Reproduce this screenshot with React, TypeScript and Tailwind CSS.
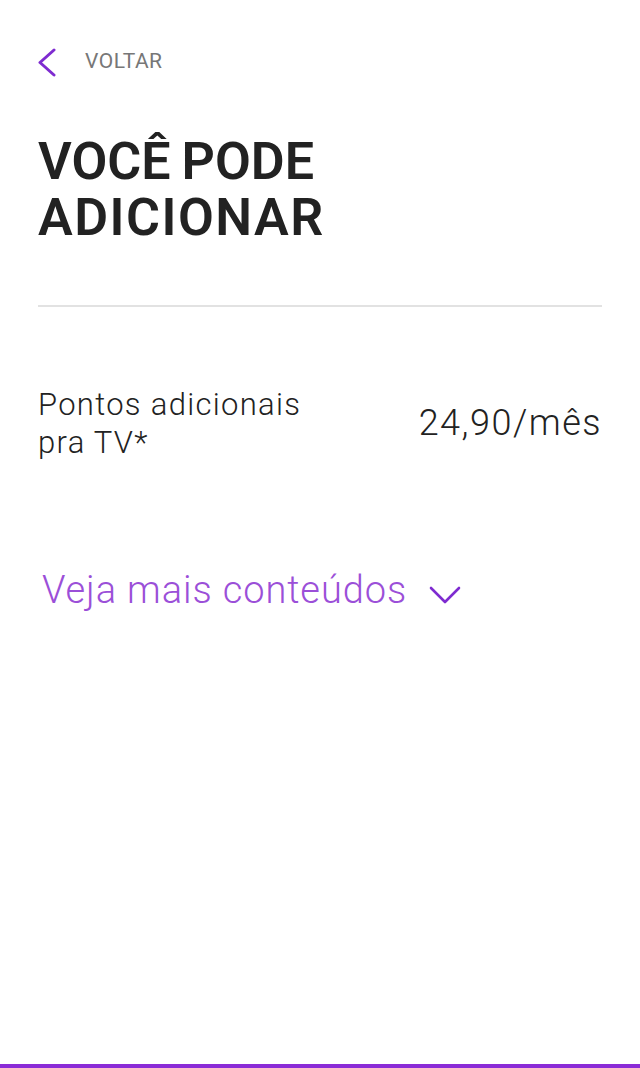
const App: React.FC = () => {
  return (
    <div
      className="relative flex h-[1068px] w-[640px] flex-col bg-white"
      style={{ fontFamily: "Roboto, 'Liberation Sans', sans-serif" }}
    >
      <div className="mt-[47px] flex h-[30px] items-center pl-[36px]">
        <svg width="20" height="30" viewBox="0 0 20 30" fill="none">
          <polyline
            points="18,3 4,15.5 18,28"
            stroke="#7e2bd0"
            strokeWidth="3"
            strokeLinecap="round"
            strokeLinejoin="round"
          />
        </svg>
        <span className="ml-[29px] text-[21px] tracking-[0.5px] text-[#777777]">VOLTAR</span>
      </div>

      <h1 className="mt-[57px] px-[38px] text-[52px] font-semibold leading-[56px] text-[#222222]">
        <span className="block [word-spacing:-2px]">VOCÊ PODE</span>
        <span className="block tracking-[1.5px]">ADICIONAR</span>
      </h1>

      <div className="mx-[38px] mt-[59px] h-[2px] bg-[#e2e2e2]" />

      <div className="mx-[38px] mt-[79px] flex items-start justify-between">
        <p className="text-[31px] font-light leading-[38px] tracking-[1.3px] text-[#222222]">
          Pontos adicionais
          <br />
          pra TV*
        </p>
        <span className="mt-[19px] text-[36px] font-light leading-[36px] tracking-[1.5px] text-[#222222]">
          24,90/mês
        </span>
      </div>

      <button className="ml-[42px] mt-[109px] flex items-start self-start">
        <span className="text-[38px] font-light leading-[38px] tracking-[0.9px] text-[#9b4fd8]">
          Veja mais conteúdos
        </span>
        <svg className="ml-[22px] mt-[14px]" width="32" height="20" viewBox="0 0 32 20" fill="none">
          <polyline
            points="2,3 16,17 30,3"
            stroke="#7e2bd0"
            strokeWidth="2.6"
            strokeLinecap="round"
            strokeLinejoin="round"
          />
        </svg>
      </button>

      <div className="mt-auto h-[4px] w-full bg-[#8a2bd6]" />
    </div>
  );
};

export default App;
